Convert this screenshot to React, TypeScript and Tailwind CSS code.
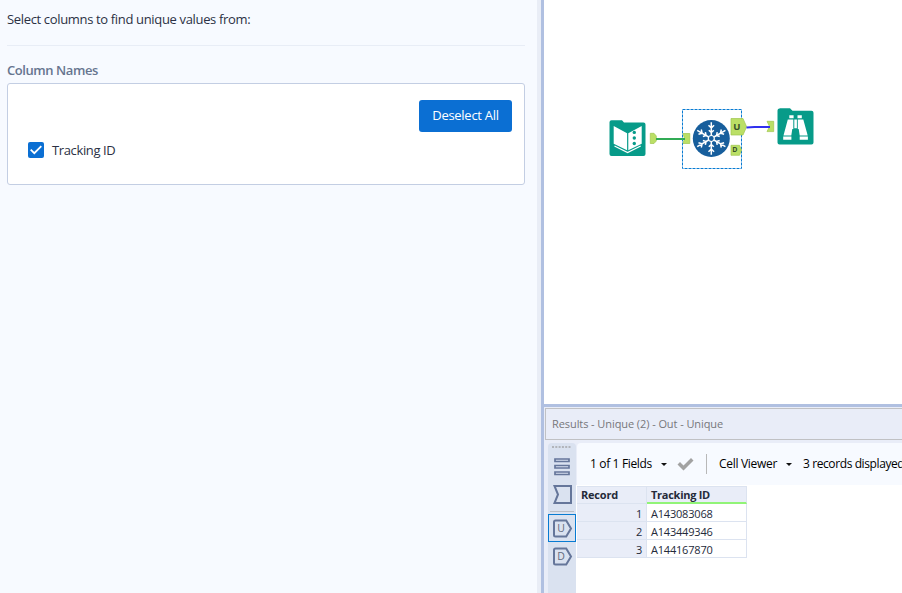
import React from 'react';

const records = ['A143083068', 'A143449346', 'A144167870'];

const Caret = () => (
    <svg className="h-[3px] w-[6px] shrink-0" viewBox="0 0 6 3">
        <path d="M0 0h6L3 3z" fill="#111" />
    </svg>
);

const ConfigPanel = () => (
    <div className="w-[537px] shrink-0 bg-[#f7faff] pl-[7px] pr-3 font-['Open_Sans','Noto_Sans',sans-serif] text-[13px]">
        <p className="h-[46px] border-b border-[#e8edf6] pt-[10px] leading-[18px] tracking-[-0.34px] text-[#2b3144]">
            Select columns to find unique values from:
        </p>
        <h2 className="mt-[15px] mb-1 h-[18px] leading-[18px] font-semibold tracking-[-0.43px] text-[#66758f]">Column Names</h2>
        <div className="h-[102px] w-[518px] rounded-[3px] border border-[#c3cee3] bg-white">
            <div className="flex justify-end pt-4 pr-3">
                <button className="h-8 w-[93px] rounded-[3px] bg-[#0b6fd3] tracking-[-0.28px] text-white">Deselect All</button>
            </div>
            <label className="mt-[10px] flex h-4 items-center pl-5">
                <span className="mr-2 flex h-4 w-4 items-center justify-center rounded-[2px] bg-[#0b6fd3]">
                    <svg className="h-4 w-4" viewBox="0 0 16 16" fill="none" stroke="white" strokeWidth="1.8">
                        <path d="M2.7 7.7l3.6 3.5L13.3 4.2" />
                    </svg>
                </span>
                <span className="pt-[2px] tracking-[-0.37px] text-[#2b3144]">Tracking ID</span>
            </label>
        </div>
    </div>
);

const Snowflake = () => (
    <g transform="translate(711.3 138.5)" stroke="white" strokeWidth="1.5" fill="none">
        <circle r="18.5" fill="#175e9c" stroke="none" />
        <circle r="3" strokeWidth="1.2" />
        {[0, 60, 120, 180, 240, 300].map((angle) => (
            <path key={angle} transform={`rotate(${angle})`} d="M0-3V-16.3M-2.8-13.2L0-10.6L2.8-13.2M-2.5-8.3L0-6L2.5-8.3" />
        ))}
    </g>
);

const WorkflowCanvas = () => (
    <svg className="block h-[404px] w-[358px] bg-white" viewBox="544 0 358 404" fontFamily="Open Sans, sans-serif">
        {/* Input tool */}
        <path d="M611.5 120.3h10.5l2 2.2h19.5a2 2 0 0 1 2 2V154a2 2 0 0 1-2 2h-32a2 2 0 0 1-2-2v-31.7a2 2 0 0 1 2-2z" fill="#079b89" />
        <path d="M613.7 126l13.4 7.3v17l-13.4-6.6zM628.3 133.3l13.4-7.3v17.7l-13.4 6.6z" fill="white" />
        <path d="M614.5 146l13.1 6.5 13.1-6.5" fill="none" stroke="white" strokeWidth="1.3" />
        <g fill="#079b89">
            <circle cx="634.3" cy="132.4" r="1.7" />
            <circle cx="634.3" cy="138" r="1.7" />
            <circle cx="634.3" cy="143.5" r="1.7" />
        </g>

        {/* Unique tool */}
        <rect x="682.5" y="109.5" width="59" height="59" fill="none" stroke="#087bd2" strokeDasharray="3 1" />
        <Snowflake />

        {/* Connections and anchors */}
        <g fill="#bbdf66" stroke="#9fc64d" strokeWidth=".7">
            <path d="M650.3 133.3h3.7l2.3 2.7v5l-2.3 2.5h-3.7z" />
            <path d="M683 133.5h6.8v10H683l1.5-5z" />
            <path d="M731 118.5h12l3.6 8.2-3.6 8.3h-12z" />
            <path d="M731 145.3h8.5l2 4.7-2 5.3H731z" />
            <path d="M767 121.3h6.7v10.3H767l2.5-5.1z" />
        </g>
        <path d="M656 139h29" stroke="#31ab55" strokeWidth="2" />
        <path d="M746.5 127.5l8-.5h15.5" fill="none" stroke="#3030ee" strokeWidth="2" />
        <text x="733.2" y="130.2" fontSize="9.5" fontWeight="700" fill="#36502a">U</text>
        <text x="732.3" y="152.3" fontSize="7" fontWeight="700" fill="#36502a">D</text>

        {/* Browse tool */}
        <path d="M780 108.3h10l2.5 2.5h19a2 2 0 0 1 2 2v29.7a2 2 0 0 1-2 2h-32a2 2 0 0 1-2-2v-32a2 2 0 0 1 2-2z" fill="#079b89" />
        <path d="M789.3 115.3h4.3v3h-4.3zM797.5 115.3h4.3v3h-4.3zM794.3 119.5h2.6v8.8h-2.6zM787.8 119.5h5.5v9.5h-1l-1 6.5h-7.8zM797.8 119.5h5.5l4.4 16h-8l-1-6.5h-.9zM783.2 136.5h8.2v3.2h-8.2zM799.7 136.5h8.2v3.2h-8.2z" fill="white" />
    </svg>
);

const ResultsRail = () => (
    <div className="h-[150px] w-7 shrink-0 rounded-t bg-[#dae2f0]">
        <svg className="h-[150px] w-7" viewBox="548 443 28 150" fill="none" stroke="#65769a" strokeWidth="2" fontFamily="Open Sans, sans-serif">
            <path d="M552 447h19" stroke="#b1b4ba" strokeWidth="2" strokeDasharray="2 1.3" />
            <path d="M555 459h14v2.5h-14zM555 465.5h14v2.5h-14zM555 472h14v2.5h-14z" strokeWidth="1.7" />
            <path d="M554.5 486H571v17h-16.5l3.5-8.5z" />
            <path d="M550 511.5h24" stroke="#b9bdc5" strokeWidth="1" />
            <rect x="548.5" y="514.5" width="27" height="27" stroke="#087bd2" strokeWidth="1" />
            <path d="M555.5 520.5h10.7l4.8 8-4.8 8h-10.7a1.5 1.5 0 0 1-1.5-1.5v-13a1.5 1.5 0 0 1 1.5-1.5zM555.5 548.5h10.7l4.8 8-4.8 8h-10.7a1.5 1.5 0 0 1-1.5-1.5v-13a1.5 1.5 0 0 1 1.5-1.5z" />
            <text x="557.2" y="532.2" fontSize="10.5" fill="#626a7c" stroke="none">U</text>
            <text x="557.2" y="560.2" fontSize="10.5" fill="#626a7c" stroke="none">D</text>
        </svg>
    </div>
);

const ResultsPanel = () => (
    <div className="h-[189px] border-t-[3px] border-[#b0c0e1] bg-[#e9edf8] font-['Open_Sans','Noto_Sans',sans-serif] text-[12px]">
        <div className="mt-px ml-px h-8 border border-r-0 border-[#c0c1c4] pl-[6px] text-[11px] leading-[30px] tracking-[-0.08px] whitespace-nowrap text-[#77777b]">
            Results - Unique (2) - Out - Unique
        </div>
        <div className="mt-[3px] flex pl-1">
            <ResultsRail />
            <div className="min-w-0 flex-1">
                <div className="ml-px flex h-[42px] items-center overflow-hidden rounded-tl bg-[#f7faff] pl-[13px] whitespace-nowrap text-black">
                    <span className="w-[71px] shrink-0 tracking-[-0.35px]">1 of 1 Fields</span>
                    <Caret />
                    <svg className="ml-[10px] h-[14px] w-[17px] shrink-0" viewBox="0 0 16 14">
                        <path d="M0 7.5L2.5 5 6 8.5 13.5 1 16 3.5 6 13.5z" fill="#a2a2a2" />
                    </svg>
                    <span className="ml-3 h-5 w-px shrink-0 bg-[#b8b8b8]" />
                    <span className="ml-3 w-[67px] shrink-0 tracking-[-0.3px]">Cell Viewer</span>
                    <Caret />
                    <span className="ml-[11px] shrink-0 tracking-[-0.4px]">3 records displayed</span>
                </div>
                <div className="h-[108px] bg-white pt-px pl-px">
                    <table className="w-[170px] table-fixed border-separate border-spacing-0 text-[11px] leading-[15px] tracking-[-0.2px] text-[#242a3a]">
                        <thead>
                            <tr className="h-[18px] bg-[#e9edf8] text-left">
                                <th className="w-[70px] border border-l-0 border-[#dce3f0] p-0 pb-px pl-1">Record</th>
                                <th className="border border-l-0 border-b-2 border-[#dce3f0] border-b-[#91f477] p-0 pl-1 tracking-[-0.27px]">Tracking ID</th>
                            </tr>
                        </thead>
                        <tbody>
                            {records.map((value, i) => (
                                <tr key={value} className="h-[18px]">
                                    <td className="border-r border-b border-[#dce3f0] bg-[#e9edf8] p-0 pt-[2px] pr-1 text-right">{i + 1}</td>
                                    <td className="border-r border-b border-[#dce3f0] p-0 pt-[2px] pl-1">{value}</td>
                                </tr>
                            ))}
                        </tbody>
                    </table>
                </div>
            </div>
        </div>
    </div>
);

export default function App() {
    return (
        <div className="flex h-[593px] w-[902px] overflow-hidden bg-white">
            <ConfigPanel />
            <div className="w-1 shrink-0 bg-[#e9edf6]" />
            <div className="w-[3px] shrink-0 bg-[#b0c0e1]" />
            <div className="flex w-[358px] shrink-0 flex-col">
                <WorkflowCanvas />
                <ResultsPanel />
            </div>
        </div>
    );
}
